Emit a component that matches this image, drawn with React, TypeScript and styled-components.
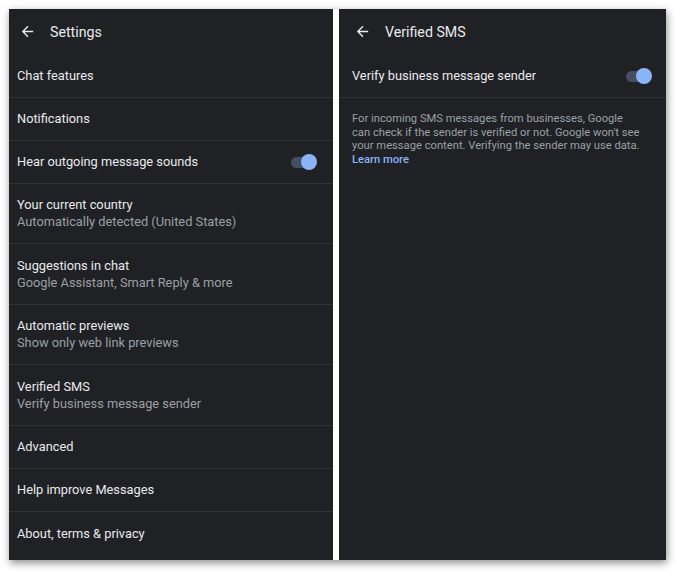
import React from "react";
import styled, { createGlobalStyle } from "styled-components";

const GlobalStyle = createGlobalStyle`
  html, body { margin: 0; padding: 0; background: #ffffff; }
  body { font-family: Roboto, "Noto Sans", Arial, sans-serif; -webkit-font-smoothing: antialiased; }
  * { box-sizing: border-box; }
`;

const Page = styled.div`
  padding: 9px 0 0 9px;
  width: 680px;
  height: 574px;
  overflow: hidden;
`;

const Frame = styled.div`
  display: flex;
  gap: 6px;
  width: 657px;
  height: 551px;
  background: #ffffff;
  box-shadow: 1px 3px 8px rgba(0, 0, 0, 0.45);
`;

const Panel = styled.div<{ $w: number }>`
  width: ${(p) => p.$w}px;
  height: 100%;
  background: #202124;
  display: flex;
  flex-direction: column;
  overflow: hidden;
`;

const Header = styled.div<{ $inset: number }>`
  height: 46px;
  flex: none;
  display: flex;
  align-items: center;
  padding-left: ${(p) => 10 + p.$inset}px;
  padding-bottom: 1px;
  gap: 15px;
  color: #e8eaed;
  font-size: 14.2px;
`;

const BackIcon = styled.svg`
  width: 17px;
  height: 17px;
  flex: none;
  margin-right: -1px;
`;

const Row = styled.div<{ $h: number; $inset: number; $right: number }>`
  height: ${(p) => p.$h}px;
  flex: none;
  display: flex;
  align-items: center;
  justify-content: space-between;
  padding: 0 ${(p) => p.$right}px 0 ${(p) => 8 + p.$inset}px;
  border-bottom: 1px solid #323336;
  &:last-child {
    border-bottom: none;
  }
`;

const TextCol = styled.div`
  display: flex;
  flex-direction: column;
  gap: 1px;
`;

const Title = styled.div`
  color: #e8eaed;
  font-size: 12.8px;
  line-height: 16px;
`;

const Subtitle = styled.div`
  color: #9aa0a6;
  font-size: 12.8px;
  line-height: 16px;
`;

const Toggle = styled.div`
  position: relative;
  width: 26px;
  height: 16px;
  flex: none;
`;

const Track = styled.div`
  position: absolute;
  left: 0;
  top: 3px;
  width: 24px;
  height: 11px;
  border-radius: 6px;
  background: #454f60;
`;

const Thumb = styled.div`
  position: absolute;
  right: 0;
  top: 0;
  width: 16px;
  height: 16px;
  border-radius: 50%;
  background: #8ab4f8;
`;

const Info = styled.div`
  padding: 14px 0 0 13px;
  width: 303px;
  color: #9aa0a6;
  font-size: 11.2px;
  line-height: 13.5px;
`;

const LearnMore = styled.span`
  color: #8ab4f8;
  font-weight: 500;
`;

const Back = () => (
  <BackIcon viewBox="0 0 24 24" fill="#e8eaed">
    <path d="M20 11H7.83l5.59-5.59L12 4l-8 8 8 8 1.41-1.41L7.83 13H20v-2z" />
  </BackIcon>
);

const Switch = () => (
  <Toggle>
    <Track />
    <Thumb />
  </Toggle>
);

type Item = { title: string; sub?: string; toggle?: boolean; h: number };

const items: Item[] = [
  { title: "Chat features", h: 43 },
  { title: "Notifications", h: 43 },
  { title: "Hear outgoing message sounds", toggle: true, h: 43 },
  { title: "Your current country", sub: "Automatically detected (United States)", h: 60 },
  { title: "Suggestions in chat", sub: "Google Assistant, Smart Reply & more", h: 61 },
  { title: "Automatic previews", sub: "Show only web link previews", h: 60 },
  { title: "Verified SMS", sub: "Verify business message sender", h: 61 },
  { title: "Advanced", h: 43 },
  { title: "Help improve Messages", h: 43 },
  { title: "About, terms & privacy", h: 43 },
];

export default function App() {
  return (
    <>
      <GlobalStyle />
      <Page>
        <Frame>
          <Panel $w={324}>
            <Header $inset={0}>
              <Back />
              <span>Settings</span>
            </Header>
            {items.map((it, i) => (
              <Row key={i} $h={it.h} $inset={0} $right={16}>
                <TextCol>
                  <Title>{it.title}</Title>
                  {it.sub && <Subtitle>{it.sub}</Subtitle>}
                </TextCol>
                {it.toggle && <Switch />}
              </Row>
            ))}
          </Panel>
          <Panel $w={327}>
            <Header $inset={5}>
              <Back />
              <span>Verified SMS</span>
            </Header>
            <Row $h={43} $inset={5} $right={14}>
              <Title>Verify business message sender</Title>
              <Switch />
            </Row>
            <Info>
              For incoming SMS messages from businesses, Google can check if the sender is verified or not. Google won't see your message content. Verifying the sender may use data.{" "}
              <LearnMore>Learn more</LearnMore>
            </Info>
          </Panel>
        </Frame>
      </Page>
    </>
  );
}
